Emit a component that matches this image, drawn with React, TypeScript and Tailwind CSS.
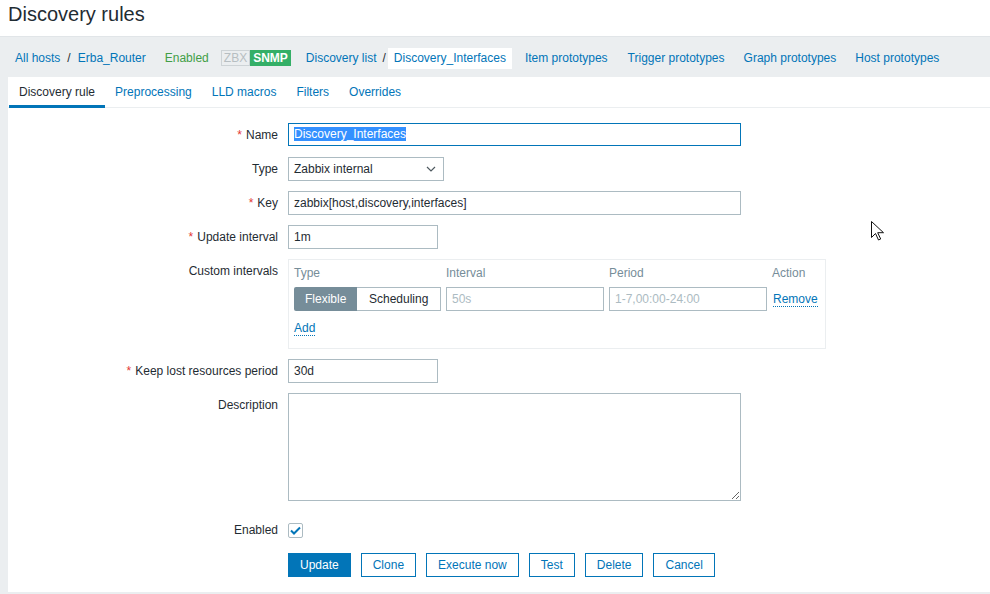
import type { ReactNode } from 'react';

const font = { fontFamily: '"Liberation Sans", Arial, sans-serif' };

function Label({ text, req }: { text: string; req?: boolean }) {
  return (
    <div className="w-[270px] shrink-0 pr-0 text-right h-[24px] leading-[24px] text-[#1f2c33]">
      {req && <span className="text-[#e33734] mr-[4px]">*</span>}
      {text}
    </div>
  );
}

function Row({ label, req, children, className }: { label: string; req?: boolean; children: ReactNode; className?: string }) {
  return (
    <div className={`flex items-start gap-[10px] ${className ?? ''}`}>
      <Label text={label} req={req} />
      {children}
    </div>
  );
}

function TextBox({ w, value, muted }: { w: string; value: string; muted?: boolean }) {
  return (
    <div className={`${w} h-[24px] border border-[#acbbc2] bg-white px-[5px] leading-[22px] ${muted ? 'text-[#acbbc2]' : 'text-[#1f2c33]'}`}>
      {value}
    </div>
  );
}

function Btn({ children, primary }: { children: ReactNode; primary?: boolean }) {
  return (
    <div
      className={`h-[24px] px-[11px] leading-[22px] border border-[#0275b8] ${
        primary ? 'bg-[#0275b8] text-white' : 'bg-white text-[#0275b8]'
      }`}
    >
      {children}
    </div>
  );
}

function Crumb({ children, className }: { children: ReactNode; className?: string }) {
  return <span className={`text-[#0275b8] ${className ?? ''}`}>{children}</span>;
}

export default function App() {
  const tabs = ['Discovery rule', 'Preprocessing', 'LLD macros', 'Filters', 'Overrides'];
  return (
    <div className="relative w-[990px] h-[594px] overflow-hidden bg-[#ebeef0] text-[12px]" style={font}>
      {/* header */}
      <div className="h-[36px] bg-white pl-[8px] text-[20px] leading-[28px] text-[#1f2c33]">Discovery rules</div>

      {/* breadcrumbs */}
      <div className="h-[41px] flex items-center pl-[15px] pt-[2px] border-t border-[#e1e5e8]">
        <Crumb>All hosts</Crumb>
        <span className="mx-[7px] text-[#1f2c33]">/</span>
        <Crumb>Erba_Router</Crumb>
        <span className="ml-[19px] text-[#429e47]">Enabled</span>
        <div className="ml-[12px] flex h-[16px] text-[12px] leading-[14px]">
          <span className="border border-[#cdd3d6] px-[2px] text-[#b7bec2]">ZBX</span>
          <span className="bg-[#34af67] px-[3px] leading-[16px] font-bold text-white">SNMP</span>
        </div>
        <Crumb className="ml-[15px]">Discovery list</Crumb>
        <span className="ml-[6px] text-[#1f2c33]">/</span>
        <div className="ml-[2px] h-[21px] bg-white px-[6px] leading-[21px] text-[#0275b8]">Discovery_Interfaces</div>
        <Crumb className="ml-[13px]">Item prototypes</Crumb>
        <Crumb className="ml-[20px]">Trigger prototypes</Crumb>
        <Crumb className="ml-[19px]">Graph prototypes</Crumb>
        <Crumb className="ml-[19px]">Host prototypes</Crumb>
      </div>

      {/* panel */}
      <div className="ml-[8px] bg-white pb-[15px]">
        <div className="flex h-[31px] border-b border-[#ebeef0]">
          {tabs.map((t, i) => (
            <div
              key={t}
              className={`relative px-[10px] leading-[30px] ${i === 0 ? 'text-[#1f2c33]' : 'text-[#0275b8]'} ${i === 0 ? 'ml-[1px]' : ''}`}
            >
              {t}
              {i === 0 && <div className="absolute left-0 right-0 bottom-[-1px] h-[3px] bg-[#0275b8]" />}
            </div>
          ))}
        </div>

        <div className="flex flex-col">
          <Row label="Name" req className="mt-[15px]">
            <div className="w-[453px] h-[23px] border border-[#0275b8] bg-white px-[5px] leading-[21px]">
              <span className="bg-[#3390ff] text-white">Discovery_Interfaces</span>
            </div>
          </Row>

          <Row label="Type" className="mt-[10px]">
            <div className="w-[156px] h-[24px] border border-[#acbbc2] bg-white pl-[5px] pr-[7px] leading-[22px] text-[#1f2c33] flex items-center justify-between">
              <span>Zabbix internal</span>
              <svg width="10" height="6" viewBox="0 0 10 6" fill="none" stroke="#4f5a60" strokeWidth="1.2">
                <path d="M1 1l4 4 4-4" />
              </svg>
            </div>
          </Row>

          <Row label="Key" req className="mt-[10px]">
            <TextBox w="w-[453px]" value="zabbix[host,discovery,interfaces]" />
          </Row>

          <Row label="Update interval" req className="mt-[10px]">
            <TextBox w="w-[150px]" value="1m" />
          </Row>

          <Row label="Custom intervals" className="mt-[10px]">
            <div className="w-[538px] h-[90px] border border-[#ebeef0] px-[5px] pt-[4px]">
              <div className="flex h-[18px] leading-[18px] text-[#768d99]">
                <span className="w-[152px]">Type</span>
                <span className="w-[163px]">Interval</span>
                <span className="w-[163px]">Period</span>
                <span>Action</span>
              </div>
              <div className="mt-[5px] flex items-center">
                <div className="flex h-[24px] w-[147px]">
                  <div className="bg-[#768d99] text-white px-[11px] leading-[24px] rounded-l-[2px]">Flexible</div>
                  <div className="flex-1 border border-l-0 border-[#acbbc2] text-center leading-[22px] text-[#1f2c33]">Scheduling</div>
                </div>
                <div className="ml-[5px]">
                  <TextBox w="w-[158px]" value="50s" muted />
                </div>
                <div className="ml-[5px]">
                  <TextBox w="w-[158px]" value="1-7,00:00-24:00" muted />
                </div>
                <span className="ml-[6px] text-[#0275b8] border-b border-dotted border-[#0275b8] leading-[14px]">Remove</span>
              </div>
              <div className="mt-[8px]">
                <span className="text-[#0275b8] border-b border-dotted border-[#0275b8] leading-[14px]">Add</span>
              </div>
            </div>
          </Row>

          <Row label="Keep lost resources period" req className="mt-[10px]">
            <TextBox w="w-[150px]" value="30d" />
          </Row>

          <Row label="Description" className="mt-[10px]">
            <textarea
              readOnly
              className="w-[453px] h-[108px] border border-[#acbbc2] bg-white outline-none"
              style={font}
            />
          </Row>

          <div className="mt-[17px] flex items-center gap-[10px]">
            <Label text="Enabled" />
            <div className="w-[15px] h-[15px] border border-[#acbbc2] rounded-[2px] flex items-center justify-center">
              <svg width="11" height="9" viewBox="0 0 11 9" fill="none" stroke="#0275b8" strokeWidth="2">
                <path d="M1 4.5l3 3 6-6" />
              </svg>
            </div>
          </div>

          <div className="mt-[11px] flex gap-[10px] pl-[280px]">
            <Btn primary>Update</Btn>
            <Btn>Clone</Btn>
            <Btn>Execute now</Btn>
            <Btn>Test</Btn>
            <Btn>Delete</Btn>
            <Btn>Cancel</Btn>
          </div>
        </div>
      </div>

      {/* mouse pointer */}
      <svg className="absolute left-[871px] top-[221px]" width="13" height="20" viewBox="0 0 13 20">
        <path d="M0.5 0.5v16l4-4 3 6.5 2.2-1-3-6.3h5.8z" fill="white" stroke="#111" strokeWidth="1" />
      </svg>
    </div>
  );
}
